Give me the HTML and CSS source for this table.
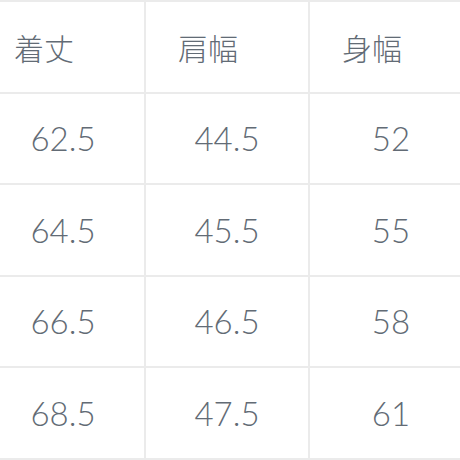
FILE: index.html
```html
<!DOCTYPE html>
<html lang="ja">
<head>
<meta charset="utf-8">
<link rel="stylesheet" href="styles.css">
</head>
<body>
<div class="size-table">
  <div class="cell head">着丈</div>
  <div class="cell head">肩幅</div>
  <div class="cell head">身幅</div>
  <div class="cell num">62.5</div>
  <div class="cell num">44.5</div>
  <div class="cell num">52</div>
  <div class="cell num">64.5</div>
  <div class="cell num">45.5</div>
  <div class="cell num">55</div>
  <div class="cell num">66.5</div>
  <div class="cell num">46.5</div>
  <div class="cell num">58</div>
  <div class="cell num">68.5</div>
  <div class="cell num">47.5</div>
  <div class="cell num">61</div>
</div>
</body>
</html>
```

FILE: styles.css
```css
html, body {
  margin: 0;
  padding: 0;
  background: #ffffff;
  overflow: hidden;
}
body {
  width: 460px;
  height: 460px;
}
.size-table {
  display: grid;
  grid-template-columns: repeat(3, 162px);
  grid-auto-rows: 89.5px;
  gap: 2px;
  padding: 2px;
  margin-left: -20px;
  width: max-content;
  background: #ebebeb;
  color: #626b75;
  font-family: Lato, "Noto Sans CJK JP", sans-serif;
}
.cell {
  background: #ffffff;
  display: flex;
  align-items: center;
}
.head {
  padding-left: 32px;
  font-family: "Noto Sans CJK JP", sans-serif;
  font-size: 30px;
  font-weight: 300;
}
.num {
  justify-content: center;
  font-size: 33px;
  font-weight: 300;
}
```
